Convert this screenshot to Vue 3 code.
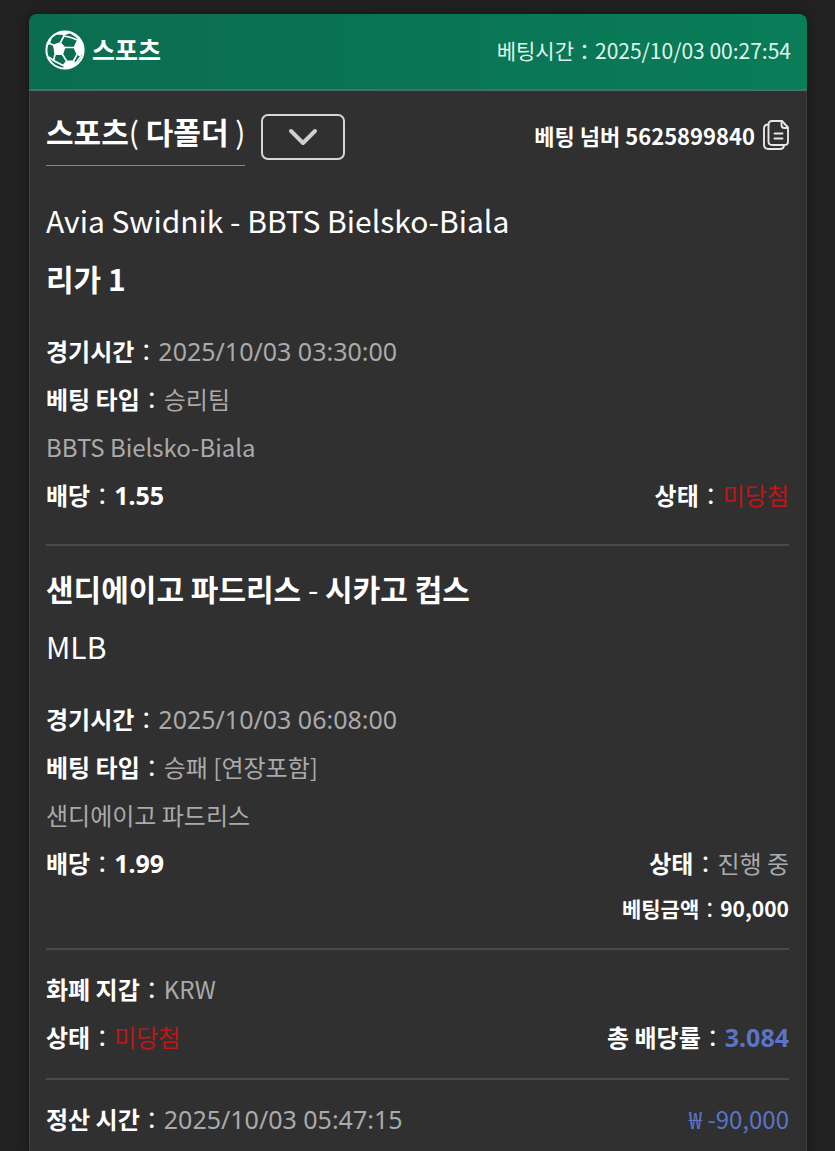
<script setup>
import { ref } from 'vue'

const open = ref(true)

const matches = [
  {
    teams: ['Avia Swidnik', 'BBTS Bielsko-Biala'],
    teamsBold: false,
    league: '리가 1',
    leagueBold: true,
    time: '2025/10/03 03:30:00',
    type: '승리팀',
    pick: 'BBTS Bielsko-Biala',
    odds: '1.55',
    status: '미당첨',
    lost: true,
  },
  {
    teams: ['샌디에이고 파드리스', '시카고 컵스'],
    teamsBold: true,
    league: 'MLB',
    leagueBold: false,
    time: '2025/10/03 06:08:00',
    type: '승패 [연장포함]',
    pick: '샌디에이고 파드리스',
    odds: '1.99',
    status: '진행 중',
    lost: false,
    stake: '90,000',
  },
]
</script>

<template>
  <main class="page">
    <article class="card">
      <header class="head">
        <div class="brand">
          <svg class="ball" viewBox="0 0 40 40" aria-hidden="true">
            <circle cx="20" cy="20" r="18.6" fill="none" stroke="currentColor" stroke-width="2" />
            <g fill="currentColor" stroke="currentColor" stroke-width="1" stroke-linejoin="round">
              <path d="M8.500 15 15.500 12.500 20 17.500 17.500 24.500 10 24.500Z" />
              <path d="M29 17.500 32.500 10 35 10 38.500 17 38 23 35.500 26 32 24.500Z" />
              <path d="M18 35 21.500 31 28.500 31 31 33 27 37 20 38.800Z" />
              <path d="M12 4 18 1.500 26 2.500 20 4.500Z" />
              <path d="M2 16 4 9.500 6.500 7.500 4.500 13.500Z" />
            </g>
            <g fill="none" stroke="currentColor" stroke-width="1.7">
              <path d="M15.500 12.500 19 6 18 3M19 6 26 7.500 32.500 10M20 17.500H29M17.500 24.500 21.500 31M10 24.500 8.500 30.500 18 35.500M8.500 15 4.500 13.500M8.500 30.500 3.500 27M32 24.500 28.500 31M26 3 32 7 35 11M31 33 36 26" />
            </g>
          </svg>
          <h1 class="brand-name">스포츠</h1>
        </div>
        <p class="bet-time">베팅시간：2025/10/03 00:27:54</p>
      </header>

      <div class="body">
        <div class="summary">
          <h2 class="kind"><b>스포츠</b>( <b>다폴더</b> )</h2>
          <button class="toggle" type="button" aria-label="상세 보기" :aria-expanded="open" @click="open = !open">
            <svg class="chevron" viewBox="0 0 30 18" aria-hidden="true">
              <path d="M3 3 15 15 27 3" fill="none" stroke="currentColor" stroke-width="4" stroke-linecap="round" stroke-linejoin="round" />
            </svg>
          </button>
          <div class="number">
            <b>베팅 넘버 5625899840</b>
            <button class="copy" type="button" aria-label="베팅 넘버 복사">
              <svg class="copy-icon" viewBox="0 0 26 30" aria-hidden="true">
                <g fill="none" stroke="currentColor" stroke-width="1.9" stroke-linecap="round" stroke-linejoin="round">
                  <path d="M9 1H19L25 7.500V21.500Q25 25 21.500 25H9Q5.500 25 5.500 21.500V4.500Q5.500 1 9 1Z" />
                  <path d="M18.500 1V5Q18.500 8 21.500 8H25" />
                  <path d="M5.500 4.500Q1 4.500 1 8.500V24.500Q1 29 5.500 29H17Q20.500 29 21 25.500" />
                  <path d="M11.500 13.500H19.500M11.500 18.500H19.500" />
                </g>
              </svg>
            </button>
          </div>
        </div>

        <section v-for="m in matches" v-show="open" :key="m.time" class="match">
          <h3 class="title">
            <span :class="{ bold: m.teamsBold }">{{ m.teams[0] }}</span> - <span :class="{ bold: m.teamsBold }">{{ m.teams[1] }}</span>
          </h3>
          <p class="title league" :class="{ bold: m.leagueBold }">{{ m.league }}</p>
          <p class="row"><span><b>경기시간</b>：<span class="value figures">{{ m.time }}</span></span></p>
          <p class="row"><span><b>베팅 타입</b>：<span class="value">{{ m.type }}</span></span></p>
          <p class="row"><span class="value">{{ m.pick }}</span></p>
          <p class="row">
            <span><b>배당</b>：<b class="figures">{{ m.odds }}</b></span>
            <span><b>상태</b>：<span class="value" :class="{ lost: m.lost }">{{ m.status }}</span></span>
          </p>
          <p v-if="m.stake" class="row stake"><span><b>베팅금액</b>：<b>{{ m.stake }}</b></span></p>
        </section>

        <section class="totals">
          <p class="row"><span><b>화폐 지갑</b>：<span class="value">KRW</span></span></p>
          <p class="row">
            <span><b>상태</b>：<span class="value lost">미당첨</span></span>
            <span><b>총 배당률</b>：<b class="figures blue">3.084</b></span>
          </p>
        </section>

        <footer class="settle">
          <p class="row">
            <span><b>정산 시간</b>：<span class="value figures">2025/10/03 05:47:15</span></span>
            <span class="blue">₩ -90,000</span>
          </p>
        </footer>
      </div>
    </article>
  </main>
</template>

<style>
body {
  margin: 0;
  background: #212121;
}
</style>

<style scoped>
.page {
  box-sizing: border-box;
  display: flex;
  min-height: 100vh;
  padding: 14px 28px 0 29px;
  background: #212121;
  color: #fff;
  font-family: "Noto Sans CJK KR", sans-serif;
  font-size: 24px;
}
h1, h2, h3, p {
  margin: 0;
  font-weight: 400;
}
b, .bold {
  font-weight: 700;
}
.card {
  flex: 1;
  border-radius: 8px 8px 0 0;
  background: #303030;
  box-shadow: 0 0 6px #151515;
}
.head {
  display: flex;
  align-items: center;
  justify-content: space-between;
  height: 71px;
  padding: 0 16px 4px;
  border-bottom: 2px solid #4a6d66;
  border-radius: 8px 8px 0 0;
  background: linear-gradient(90deg, #0b6d4f, #097c58);
}
.brand {
  display: flex;
  align-items: center;
  gap: 7px;
}
.ball {
  width: 40px;
  height: 40px;
}
.brand-name {
  padding-bottom: 2px;
  font-size: 25px;
  font-weight: 700;
  line-height: 36px;
}
.bet-time {
  color: #e0f5ed;
  font-size: 21px;
}
.body {
  padding: 0 17px 8px 16px;
  border: solid #3e4042;
  border-width: 0 1px;
}
.summary {
  display: flex;
  align-items: flex-start;
  padding-top: 20px;
  margin-bottom: 25px;
}
.kind {
  padding-bottom: 14px;
  border-bottom: 1px solid #858585;
  font-size: 30px;
  line-height: 40px;
}
.toggle {
  display: flex;
  align-items: center;
  justify-content: center;
  width: 84px;
  height: 46px;
  margin: 3px 0 0 16px;
  padding: 0;
  border: 2px solid #d6d6d6;
  border-radius: 7px;
  background: none;
  color: #cfcfcf;
}
.chevron {
  width: 30px;
  height: 18px;
}
.number {
  display: flex;
  align-items: center;
  gap: 8px;
  margin-left: auto;
  font-size: 22px;
  line-height: 48px;
}
.copy {
  display: flex;
  padding: 0;
  border: 0;
  background: none;
  color: #e6e6e6;
}
.copy-icon {
  width: 26px;
  height: 30px;
  overflow: visible;
}
.title {
  font-size: 30px;
  line-height: 58px;
}
.league {
  margin-bottom: 20px;
}
.row {
  display: flex;
  justify-content: space-between;
  line-height: 48px;
}
.value {
  color: #aaa;
}
.figures {
  font-family: "Noto Sans", "Noto Sans CJK KR", sans-serif;
  font-size: 25px;
  line-height: 1;
}
.lost {
  color: #c01616;
}
.blue {
  color: #5b74c6;
}
.stake {
  justify-content: flex-end;
  font-size: 21px;
  line-height: 42px;
}
.match {
  padding-bottom: 25px;
  border-bottom: 2px solid #4a4a4a;
}
.match + .match {
  padding: 13px 0 19px;
}
.totals {
  padding: 15px 0 17px;
  border-bottom: 2px solid #4a4a4a;
}
.settle {
  padding-top: 15px;
}
</style>
